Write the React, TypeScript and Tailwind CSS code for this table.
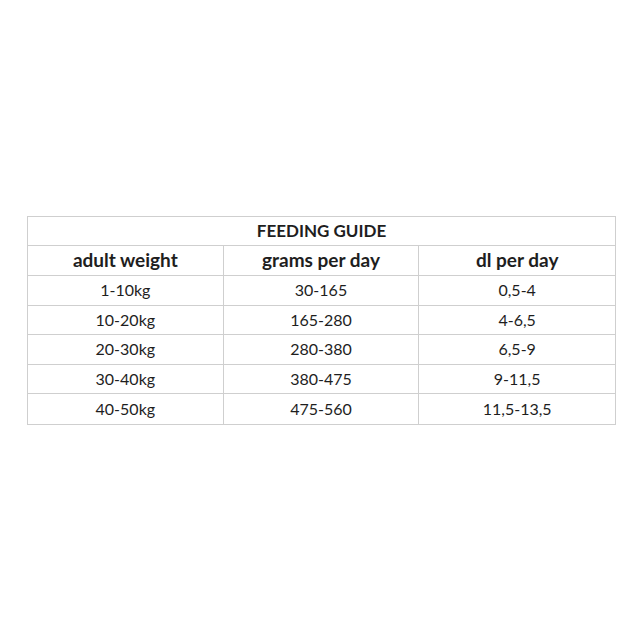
import React from 'react'

const rows = [
  ['1-10kg', '30-165', '0,5-4'],
  ['10-20kg', '165-280', '4-6,5'],
  ['20-30kg', '280-380', '6,5-9'],
  ['30-40kg', '380-475', '9-11,5'],
  ['40-50kg', '475-560', '11,5-13,5'],
]

export default function App() {
  return (
    <div className="w-[640px] h-[640px] bg-white pt-[216px] pl-[27px] font-['Lato','Open_Sans',sans-serif] text-[#1e1e1e]">
      <div className="w-[589px] border border-[#cfcfcf]">
        <div className="h-[29px] flex items-center justify-center border-b border-[#cfcfcf] text-[17px] font-bold">
          FEEDING GUIDE
        </div>
        <div className="grid grid-cols-3 h-[30px] border-b border-[#cfcfcf] text-[19px] font-bold">
          <div className="flex items-center justify-center border-r border-[#cfcfcf]">adult weight</div>
          <div className="flex items-center justify-center border-r border-[#cfcfcf]">grams per day</div>
          <div className="flex items-center justify-center">dl per day</div>
        </div>
        {rows.map((r, i) => (
          <div
            key={i}
            className={`grid grid-cols-3 h-[29.5px] text-[16px] ${i < rows.length - 1 ? 'border-b border-[#cfcfcf]' : ''}`}
          >
            <div className="flex items-center justify-center border-r border-[#cfcfcf]">{r[0]}</div>
            <div className="flex items-center justify-center border-r border-[#cfcfcf]">{r[1]}</div>
            <div className="flex items-center justify-center">{r[2]}</div>
          </div>
        ))}
      </div>
    </div>
  )
}
